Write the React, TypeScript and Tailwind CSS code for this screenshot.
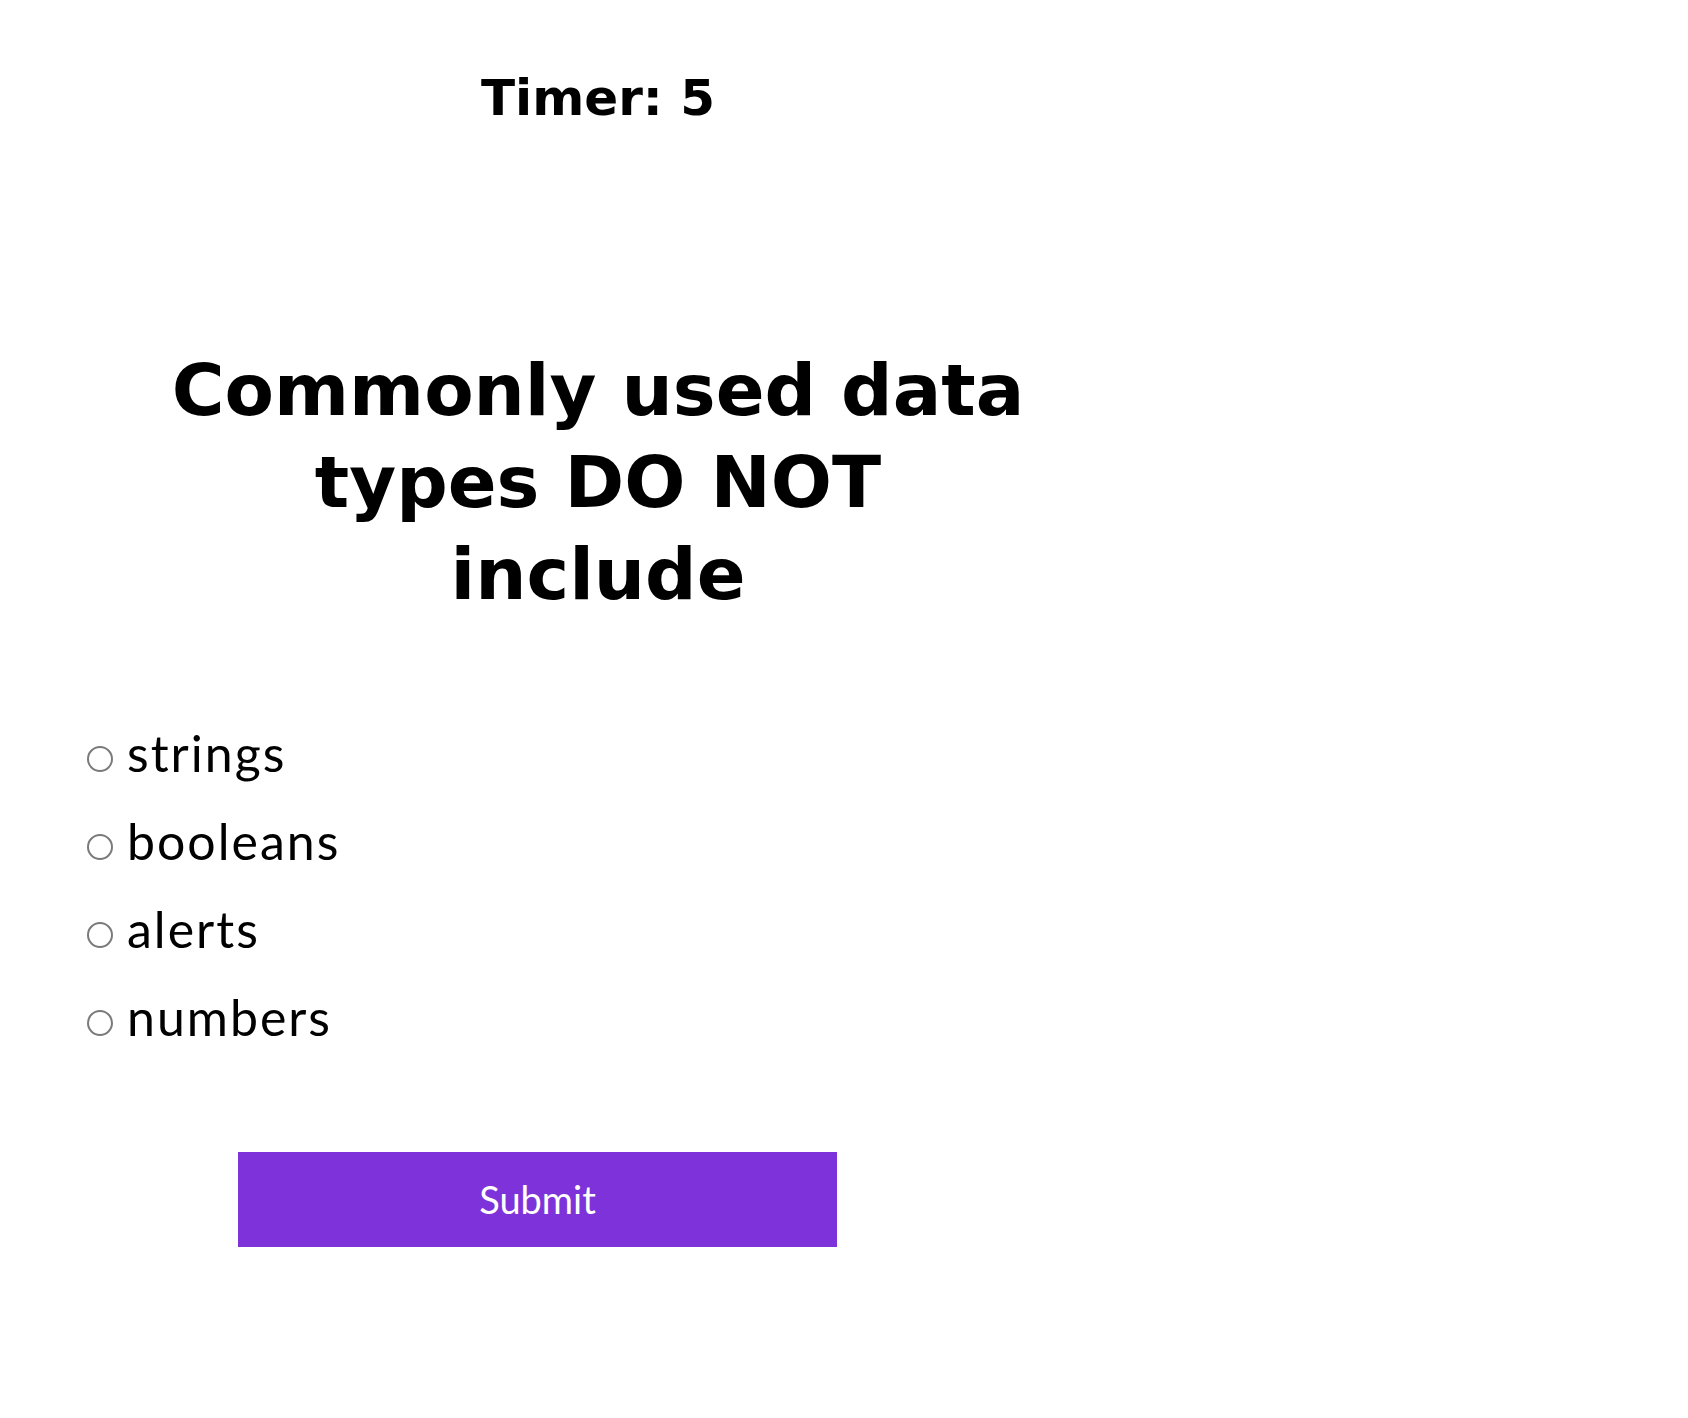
import React from "react";

const options = ["strings", "booleans", "alerts", "numbers"];

export default function App() {
  return (
    <div className="w-[1688px] min-h-[1418px] bg-white text-black font-['Lato','Open_Sans',sans-serif]">
      <div className="w-[1196px] flex flex-col">
        <h2 className="pt-[68px] text-center text-[50px] leading-[60px] font-bold font-['DejaVu_Sans',sans-serif]">
          Timer: 5
        </h2>
        <h1 className="mt-[216px] text-center text-[72px] leading-[92px] font-bold font-['DejaVu_Sans',sans-serif]">
          Commonly used data
          <br />
          types DO NOT
          <br />
          include
        </h1>
        <div className="mt-[89px] pl-[87px] flex flex-col">
          {options.map((o) => (
            <label key={o} className="flex items-center h-[88px] text-[50px] leading-[88px] tracking-[2px]">
              <span className="mt-[12px] w-[26px] h-[26px] rounded-full border-2 border-[#7a7a7a] bg-white shrink-0" />
              <span className="ml-[14px]">{o}</span>
            </label>
          ))}
        </div>
        <div className="mt-[91px] pl-[238px]">
          <button className="w-[599px] h-[95px] bg-[#7e32d9] text-white text-[38px] flex items-center justify-center">
            Submit
          </button>
        </div>
      </div>
    </div>
  );
}
